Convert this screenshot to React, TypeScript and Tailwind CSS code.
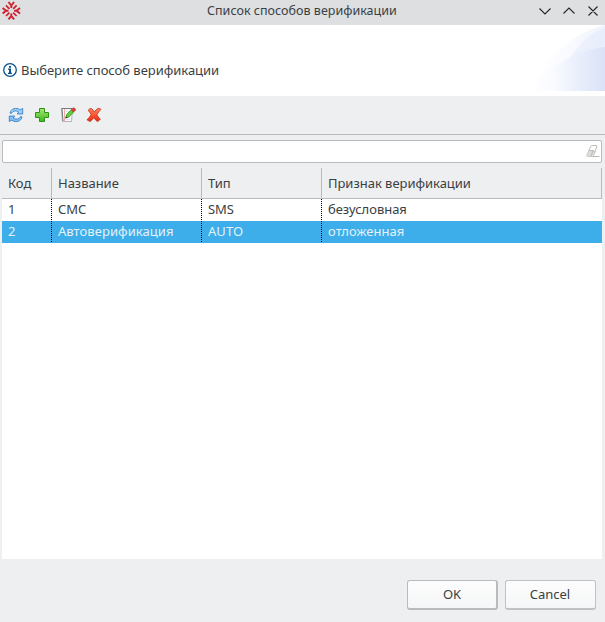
import React from 'react';

const columns = [
  { title: 'Код', width: 'w-[50px]' },
  { title: 'Название', width: 'w-[150px]' },
  { title: 'Тип', width: 'w-[120px]' },
  { title: 'Признак верификации', width: 'w-[280px]' },
];

const rows = [
  { cells: ['1', 'СМС', 'SMS', 'безусловная'], selected: false },
  { cells: ['2', 'Автоверификация', 'AUTO', 'отложенная'], selected: true },
];

function Logo() {
  return (
    <svg className="ml-[2px] h-[19px] w-[19px]" viewBox="0 0 19 19" fill="none" stroke="#d01f2d" strokeWidth="1.9">
      {[0, 90, 180, 270].map((a) => (
        <g key={a} transform={`rotate(${a} 9.3 9.7)`}>
          <path d="M6.5 1 9.3 4.5 12.1 1M9.3 4V6.9" />
          <path d="M11.2 7.8 14.6 4.4" strokeWidth="1.7" />
        </g>
      ))}
    </svg>
  );
}

function InfoIcon() {
  return (
    <svg className="h-[14px] w-[14px]" viewBox="0 0 14 14">
      <circle cx="7" cy="7" r="6.3" fill="#fff" stroke="#07528f" strokeWidth="1.3" />
      <path d="M6 3h2v1.7H6zM5 5.6h3v4.2h1V11H5V9.8h1V6.8H5z" fill="#07528f" />
    </svg>
  );
}

function BannerArt() {
  return (
    <svg className="h-[66px] w-[75px]" viewBox="0 0 75 66">
      <defs>
        <linearGradient id="outer" gradientUnits="userSpaceOnUse" x1="0" x2="75" y1="0" y2="0">
          <stop offset="0" stopColor="#fff" />
          <stop offset=".5" stopColor="#fafbff" />
          <stop offset="1" stopColor="#eff3fd" />
        </linearGradient>
        <linearGradient id="inner" gradientUnits="userSpaceOnUse" x1="0" x2="75" y1="0" y2="0">
          <stop offset="0" stopColor="#fff" />
          <stop offset=".3" stopColor="#f9fbff" />
          <stop offset=".6" stopColor="#ebf0fc" />
          <stop offset="1" stopColor="#dae2f7" />
        </linearGradient>
      </defs>
      <path d="M0 66C10 42 36 9 75 0V66Z" fill="url(#outer)" />
      <path d="M38 36Q52 12 75 2V40H38Z" fill="#dfe7f9" opacity=".4" />
      <path d="M0 66C14 44 44 25 75 22V66Z" fill="url(#inner)" />
    </svg>
  );
}

function RefreshIcon() {
  return (
    <svg className="h-4 w-4" viewBox="0 0 16 16" stroke="#2c73c2" strokeWidth=".8" strokeLinejoin="round">
      <path d="M2 6.2C2.6 1.4 8.6.1 12.2 2.8L14.7 1.4V7H9.3L10.7 4.9C8 3.3 4.9 3.6 3.8 6.2Z" fill="#9bd0fa" />
      <path d="M14 9.8C13.4 14.6 7.4 15.9 3.8 13.2L1.3 14.6V9H6.7L5.3 11.1C8 12.7 11.1 12.4 12.2 9.8Z" fill="#83c0f5" />
    </svg>
  );
}

function AddIcon() {
  return (
    <svg className="h-4 w-4" viewBox="0 0 16 16">
      <defs>
        <linearGradient id="plus" x2="0" y2="1">
          <stop stopColor="#a6e876" />
          <stop offset="1" stopColor="#3fb51c" />
        </linearGradient>
      </defs>
      <path d="M5.5 1.5h5v4h4v5h-4v4h-5v-4h-4v-5h4z" fill="url(#plus)" stroke="#2c9414" strokeLinejoin="round" />
    </svg>
  );
}

function EditIcon() {
  return (
    <svg className="h-4 w-4" viewBox="0 0 16 16">
      <path d="M1.5 1.5H12.5L11.5 14.5H2.5Z" fill="#f8fafb" stroke="#b2b2ba" />
      <path d="M1.5 1.5H12M2 2l1 12" stroke="#77777f" />
      <path d="M4.5 2v12" stroke="#f3aaa5" />
      <path d="M6 4.5h4M6 7.5h4M6 10.5h4M6 12.5h4" stroke="#cddae6" strokeWidth=".7" />
      <path d="M5.8 10.9 6.7 7.5 11.3 2.7 13.6 5 8.8 10Z" fill="#62d136" stroke="#2f8d22" strokeWidth=".8" />
      <path d="M11.3 2.7 12.5 1.4Q13.8.4 15 1.6T14.7 4L13.6 5Z" fill="#e84135" stroke="#b12322" strokeWidth=".7" />
      <path d="M5.3 11.4 6 9.4 7.3 10.6Z" fill="#222" />
    </svg>
  );
}

function DeleteIcon() {
  return (
    <svg className="h-4 w-4" viewBox="0 0 16 16">
      <defs>
        <linearGradient id="cross" x2="0" y2="1">
          <stop stopColor="#ff8a60" />
          <stop offset=".6" stopColor="#f74d28" />
          <stop offset="1" stopColor="#e52c17" />
        </linearGradient>
      </defs>
      <path d="M2.2 3.2Q3.6 1.4 5.5 1.6Q7.2 3 8.2 5.2Q10.2 2.2 12.3 1.3L14.9 2.3Q12.2 5 10.8 7.8Q12.2 10.5 14.3 12Q13 14.2 11.2 14.4Q9.2 12.9 7.9 10.6Q6.2 13 4 14.5L1 12.8Q3.6 10.4 5.2 7.7Q4 5.3 2.2 3.2Z" fill="url(#cross)" stroke="#cc3019" strokeWidth=".9" strokeLinejoin="round" />
    </svg>
  );
}

function EraserIcon() {
  return (
    <svg className="h-[13px] w-[14px]" viewBox="0 0 14 13" fill="none" stroke="#bcbcb7">
      <path d="M4.7 1.5Q5.2.5 6.2.5H10Q11.2.5 10.7 2L7.5 10.5Q7 11.5 6 11.5H1.5Q.5 11.5 1 10Z" fill="#fff" />
      <path d="M3 6 1 10Q.5 11.5 1.5 11.5H6L8.7 6Z" fill="#dcdcd8" stroke="none" />
      <path d="M3.2 5.5H7.2L9.3 7M7.2 5.5 5 11.5M6.5 11.5H13.5" />
    </svg>
  );
}

function WindowControls() {
  return (
    <svg className="ml-auto mr-[6px] h-[12px] w-[62px]" viewBox="0 0 62 12" fill="none" stroke="#242628" strokeWidth="1.1">
      <path d="M2.5 3.5 8 9 13.5 3.5M26.5 8.5 32 3 37.5 8.5M51.5 1.5 60.5 10.5M60.5 1.5 51.5 10.5" />
    </svg>
  );
}

export default function App() {
  return (
    <div className="flex h-[622px] w-[605px] flex-col overflow-hidden bg-[#eeeff1] font-['Noto_Sans',sans-serif] text-[13px] leading-[18px] tracking-[-0.03px] text-[#3a3f44]">
      <header className="flex h-[25px] shrink-0 items-start bg-[#dedfe1] pt-[1px]">
        <Logo />
        <h1 className="ml-[186px] mt-px whitespace-nowrap text-[12.5px] tracking-[0.02px]">Список способов верификации</h1>
        <div className="mt-[4px] ml-auto"><WindowControls /></div>
      </header>
      <section className="flex h-[71px] shrink-0 items-start bg-white pl-[3px]">
        <div className="flex items-center gap-[4px] pt-[36px]">
          <InfoIcon />
          <p className="whitespace-nowrap">Выберите способ верификации</p>
        </div>
        <div className="ml-auto"><BannerArt /></div>
      </section>
      <nav className="flex h-[39px] shrink-0 items-center gap-[10px] border-b border-[#b9bbbd] pl-2">
        <RefreshIcon /><AddIcon /><EditIcon /><DeleteIcon />
      </nav>
      <div className="ml-[2px] mt-[5px] flex h-[23px] w-[600px] shrink-0 items-center justify-end rounded-[2px] border border-[#b9bbbd] bg-white pr-px">
        <EraserIcon />
      </div>
      <main className="ml-[2px] mt-[5px] flex h-[391px] w-[600px] shrink-0 flex-col bg-white">
        <div className="flex h-[31px] border-b border-[#b9bbbd] bg-[#eeeff1]">
          {columns.map((c) => (
            <div key={c.title} className={`${c.width} flex items-center border-r border-[#b9bbbd] pl-[6px] pb-px whitespace-nowrap`}>
              {c.title}
            </div>
          ))}
        </div>
        {rows.map((r) => (
          <div key={r.cells[0]} className={`flex h-[22px] ${r.selected ? 'bg-[#3daee9] tracking-[0.06px] text-[#e3f1f9]' : ''}`}>
            {r.cells.map((cell, i) => (
              <div key={i} className={`${columns[i].width} flex whitespace-nowrap pl-[6px] pt-px`}>
                <span>{cell}</span>
                {i < 3 && <i className="ml-auto -mt-px h-[22px] w-px bg-[repeating-linear-gradient(to_bottom,#000_0px,#000_1px,transparent_1px,transparent_2px)]" />}
              </div>
            ))}
          </div>
        ))}
      </main>
      <footer className="flex flex-1 items-start justify-end gap-[7px] pr-[9px] pt-[21px]">
        <button className="h-[30px] w-[91px] rounded-[3px] border border-r-2 border-b-2 border-[#b9bbbd] bg-linear-to-b from-[#fdfdfd] to-[#f5f6f7] pb-px">OK</button>
        <button className="h-[30px] w-[91px] rounded-[3px] border border-b-2 border-[#bfc1c3] bg-linear-to-b from-[#fdfdfd] to-[#f5f6f7] pr-px pb-px">Cancel</button>
      </footer>
    </div>
  );
}
